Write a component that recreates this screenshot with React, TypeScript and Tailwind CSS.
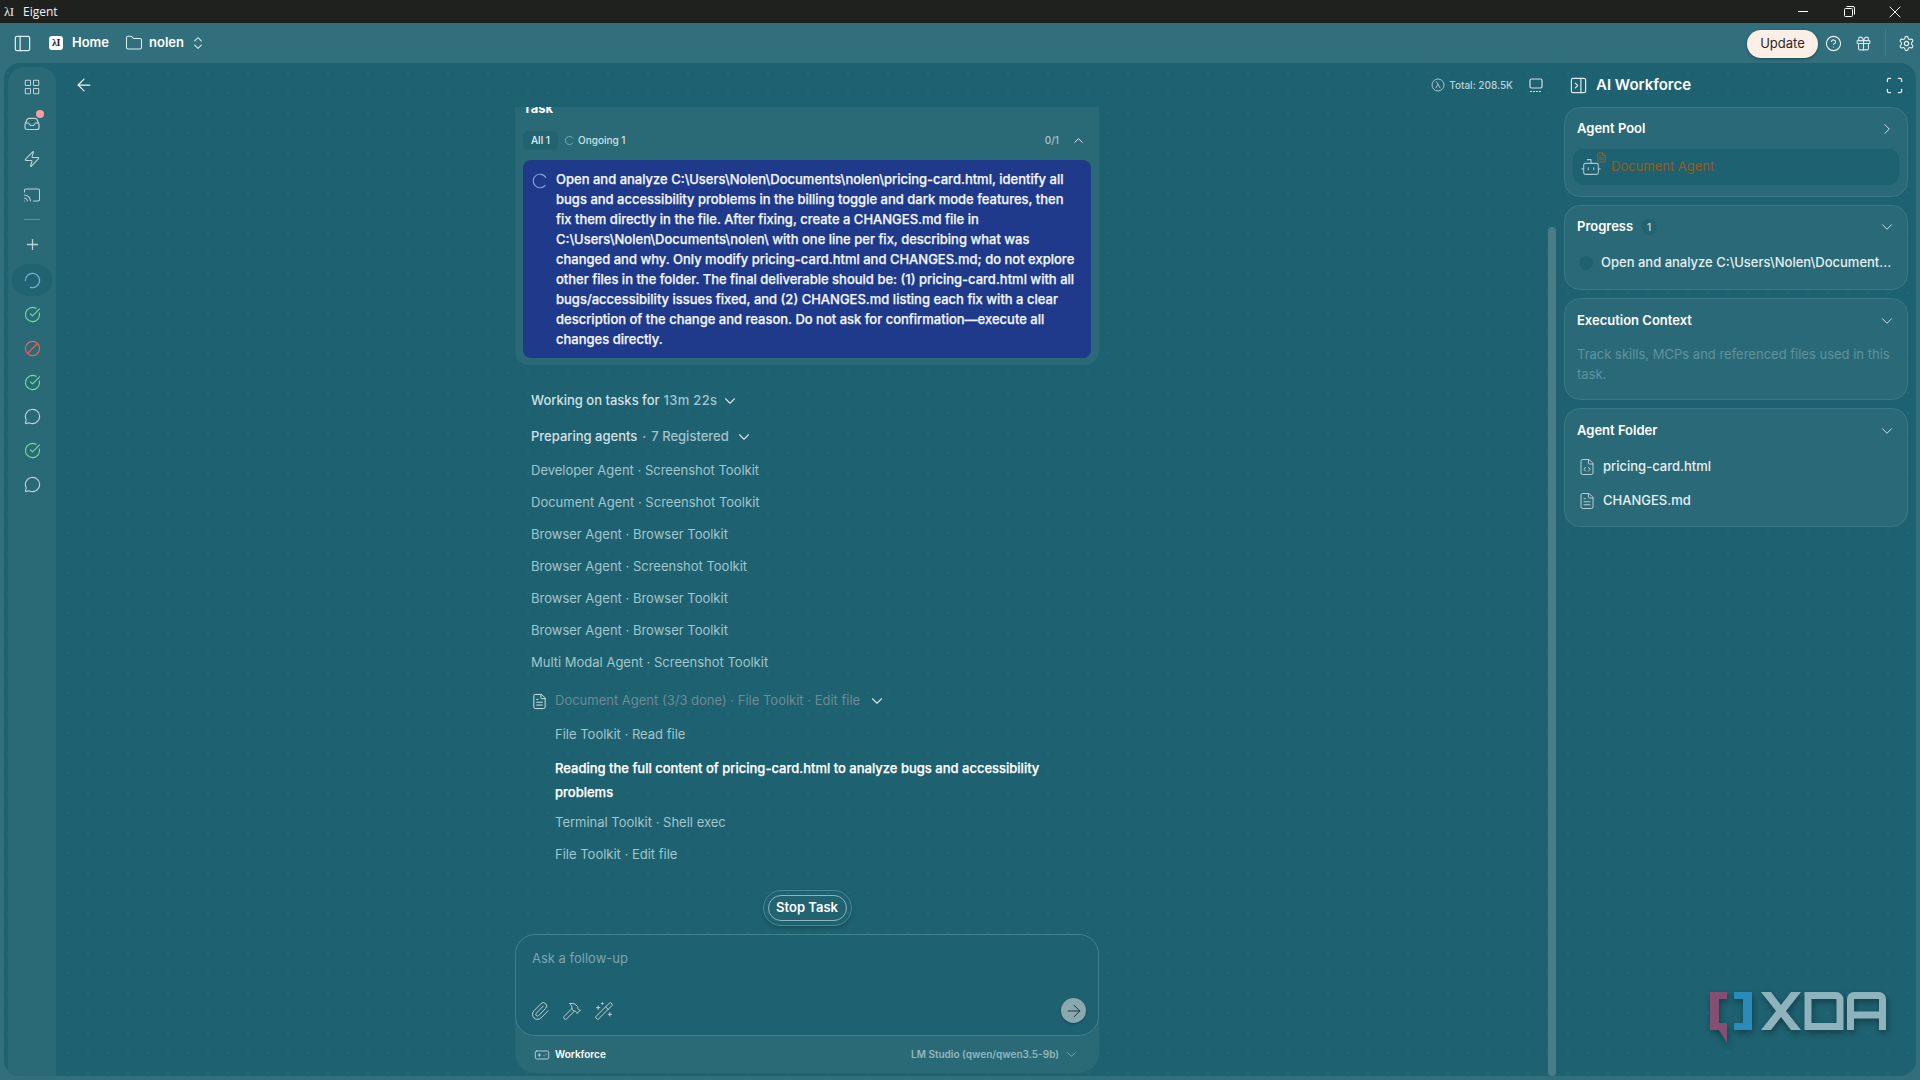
import {
  ArrowLeft,
  ArrowRight,
  Ban,
  Bot,
  ChevronDown,
  ChevronRight,
  ChevronUp,
  ChevronsUpDown,
  CircleCheckBig,
  CircleHelp,
  Cast,
  FileCode,
  FileText,
  Folder,
  Gamepad,
  Gift,
  Hammer,
  LayoutGrid,
  LoaderCircle,
  MessageCircle,
  Paperclip,
  PanelLeft,
  PanelRightClose,
  Plus,
  Scan,
  Settings,
  WandSparkles,
  X,
  Zap,
} from 'lucide-react';

const TASK_TEXT =
  'Open and analyze C:\\Users\\Nolen\\Documents\\nolen\\pricing-card.html, identify all bugs and accessibility problems in the billing toggle and dark mode features, then fix them directly in the file. After fixing, create a CHANGES.md file in C:\\Users\\Nolen\\Documents\\nolen\\ with one line per fix, describing what was changed and why. Only modify pricing-card.html and CHANGES.md; do not explore other files in the folder. The final deliverable should be: (1) pricing-card.html with all bugs/accessibility issues fixed, and (2) CHANGES.md listing each fix with a clear description of the change and reason. Do not ask for confirmation—execute all changes directly.';

const TOOL_ROWS = [
  'Developer Agent · Screenshot Toolkit',
  'Document Agent · Screenshot Toolkit',
  'Browser Agent · Browser Toolkit',
  'Browser Agent · Screenshot Toolkit',
  'Browser Agent · Browser Toolkit',
  'Browser Agent · Browser Toolkit',
  'Multi Modal Agent · Screenshot Toolkit',
];

function LambdaMark({ className }: { className: string }) {
  return (
    <span className={`font-['Liberation_Serif',serif] tracking-[-0.5px] leading-none ${className}`}>
      λI
    </span>
  );
}

function TitleBar() {
  return (
    <div className="h-[23px] shrink-0 bg-[#1f211f] flex items-center text-[#f2f2f2]">
      <LambdaMark className="ml-[4px] w-[19px] text-[13px] text-[#e8e8e8]" />
      <span className="text-[12px] font-['Open_Sans',sans-serif]">Eigent</span>
      <div className="ml-auto mr-[2px] flex items-center">
        <div className="w-[46px] flex justify-center">
          <div className="w-[10px] h-px bg-white" />
        </div>
        <div className="w-[46px] flex justify-center">
          <svg width="11" height="11" viewBox="0 0 11 11" fill="none" stroke="#fff" strokeWidth="1">
            <rect x="0.5" y="2.5" width="8" height="8" rx="1" />
            <path d="M2.5 .5h6.5a1.5 1.5 0 0 1 1.5 1.5v6.5" />
          </svg>
        </div>
        <div className="w-[46px] flex justify-center">
          <X size={20} strokeWidth={1.2} />
        </div>
      </div>
    </div>
  );
}

function TopBar() {
  return (
    <div className="h-[40px] shrink-0 flex items-center pl-[13px] pr-[5px] text-white">
      <PanelLeft size={19} strokeWidth={1.6} className="text-[#dcebef]" />
      <div className="ml-[17px] w-[14px] h-[14px] rounded-[3px] bg-white flex items-center justify-center text-[#222]">
        <LambdaMark className="text-[10px] font-bold" />
      </div>
      <span className="ml-[9px] text-[13px] font-semibold">Home</span>
      <Folder size={18} strokeWidth={1.4} className="ml-[16px] text-[#dcebef]" />
      <span className="ml-[6px] text-[13px] font-semibold">nolen</span>
      <ChevronsUpDown size={16} strokeWidth={1.6} className="ml-[6px] text-[#c9dde2]" />
      <button className="ml-auto w-[71px] h-[28px] mt-[1px] rounded-full bg-[#fdeee6] text-[#29292b] text-[13px] shadow-[0_1px_3px_rgba(0,0,0,0.35)]">
        Update
      </button>
      <CircleHelp size={17} strokeWidth={1.6} className="ml-[7px] text-[#e6f0f2]" />
      <Gift size={17} strokeWidth={1.6} className="ml-[13px] text-[#d5e5e9]" />
      <div className="ml-[13px] w-px h-[28px] bg-[#3f7c89]" />
      <Settings size={17} strokeWidth={1.6} className="ml-[12px] text-[#e6f0f2]" />
    </div>
  );
}

function Sidebar() {
  const muted = 'text-[#bcd3d8]';
  return (
    <div className="w-[48px] shrink-0 ml-[4px] mt-[4px] rounded-t-[16px] bg-[#2a6a77] flex flex-col items-center pt-[11px]">
      <LayoutGrid size={18} strokeWidth={1.4} className={muted} />
      <div className="relative mt-[20px] h-[15px]">
        <svg width="16" height="15" viewBox="0 0 16 15" fill="none" stroke="#bcd3d8" strokeWidth="1.2" strokeLinejoin="round">
          <path d="M1 8.5 3 3.5a2 2 0 0 1 2-1.2h6a2 2 0 0 1 2 1.2l2 5v3a2 2 0 0 1-2 2H3a2 2 0 0 1-2-2z" />
          <path d="M1 7h3.5l2 2.5h3l2-2.500H15" />
        </svg>
        <span className="absolute right-[-4px] top-[-6px] w-[8px] h-[8px] rounded-full bg-[#fb9e9e]" />
      </div>
      <Zap size={18} strokeWidth={1.4} className={`mt-[19px] ${muted}`} />
      <Cast size={18} strokeWidth={1.4} className={`mt-[18px] ${muted}`} />
      <div className="mt-[15px] w-[16px] h-px bg-[#5b919d]" />
      <Plus size={17} strokeWidth={1.8} className={`mt-[16px] ${muted}`} />
      <div className="mt-[11px] w-[40px] h-[32px] rounded-full bg-[#226371] flex items-center justify-center">
        <LoaderCircle size={19} strokeWidth={1.6} className="text-[#6fb1d8] rotate-180" />
      </div>
      <CircleCheckBig size={17} strokeWidth={1.6} className="mt-[10px] text-[#71dc9e]" />
      <Ban size={17} strokeWidth={1.6} className="mt-[17px] -scale-x-100 text-[#ee5f5f]" />
      <CircleCheckBig size={17} strokeWidth={1.6} className="mt-[17px] text-[#71dc9e]" />
      <MessageCircle size={17} strokeWidth={1.6} className={`mt-[17px] ${muted}`} />
      <CircleCheckBig size={17} strokeWidth={1.6} className="mt-[17px] text-[#71dc9e]" />
      <MessageCircle size={17} strokeWidth={1.6} className={`mt-[17px] ${muted}`} />
    </div>
  );
}

function TaskCard() {
  return (
    <div className="w-[584px] h-[258px] shrink-0 overflow-hidden rounded-b-[14px] bg-[#2a6a77] px-[8px]">
      <div className="h-[24px] text-[13px] font-bold text-white leading-[14px] -translate-y-[6px]">Task</div>
      <div className="flex items-center h-[19px] text-[10px] font-medium">
        <span className="w-[35px] h-[19px] rounded-[5px] bg-[#226371] flex items-center justify-center text-[#e6f0f2]">All 1</span>
        <LoaderCircle size={11} strokeWidth={1.8} className="ml-[6px] text-[#6fb1d8] rotate-[40deg]" />
        <span className="ml-[3px] text-[#cfe0e4]">Ongoing 1</span>
        <span className="ml-auto text-[#a5c2c9]">0/1</span>
        <ChevronUp size={15} strokeWidth={1.6} className="ml-[12px] mr-[5px] text-[#e6f0f2]" />
      </div>
      <div className="mt-[10px] h-[198px] rounded-[8px] bg-[#1f3a8a] flex pt-[9px] pl-[8px] pr-[14px]">
        <LoaderCircle size={18} strokeWidth={1.5} className="mt-[3px] shrink-0 text-[#7da4e0] rotate-[40deg]" />
        <p className="ml-[7px] text-[13px] leading-[20px] font-medium text-[#f2f5fc] [-webkit-text-stroke:0.25px_currentColor]">{TASK_TEXT}</p>
      </div>
    </div>
  );
}

function ActivityLog() {
  return (
    <div className="w-[582px] shrink-0 pl-[15px] text-[13px] text-[#a3c5cc] font-medium">
      <div className="mt-[26px] h-[20px] flex items-center">
        <span className="text-[#d2e2e6] font-medium">Working on tasks for</span>
        <span className="ml-[4px] tracking-[0.3px]">13m 22s</span>
        <ChevronDown size={18} strokeWidth={1.5} className="ml-[4px] text-[#d2e2e6]" />
      </div>
      <div className="mt-[16px] h-[20px] flex items-center">
        <span className="text-[#d2e2e6]">Preparing agents</span>
        <span className="ml-[5px]">·</span>
        <span className="ml-[5px]">7 Registered</span>
        <ChevronDown size={18} strokeWidth={1.5} className="ml-[6px] text-[#d2e2e6]" />
      </div>
      <div className="mt-[8px] flex flex-col">
        {TOOL_ROWS.map((row, i) => (
          <div key={i} className="h-[32px] flex items-center font-normal">
            {row}
          </div>
        ))}
      </div>
      <div className="relative mt-[6px] h-[32px] flex items-center pl-[24px] font-normal">
        <FileText size={17} strokeWidth={1.4} className="absolute left-0 top-[8px] text-[#d2e2e6]" />
        <span className="text-[#6e8a93]">Document Agent (3/3 done) · File Toolkit · Edit file</span>
        <ChevronDown size={18} strokeWidth={1.5} className="ml-[8px] text-[#d2e2e6]" />
      </div>
      <div className="pl-[24px] font-normal">
        <div className="h-[24px] mt-[6px] flex items-center">File Toolkit · Read file</div>
        <p className="mt-[9px] w-[510px] leading-[24px] font-medium text-white [-webkit-text-stroke:0.25px_currentColor]">
          Reading the full content of pricing-card.html to analyze bugs and accessibility problems
        </p>
        <div className="h-[24px] mt-[7px] flex items-center">Terminal Toolkit · Shell exec</div>
        <div className="h-[24px] mt-[8px] flex items-center">File Toolkit · Edit file</div>
      </div>
    </div>
  );
}

function Composer() {
  return (
    <div className="w-[584px] h-[139px] shrink-0 rounded-[20px] bg-[#2a6a77]">
      <div className="h-[102px] rounded-[20px] border border-[#41808d] bg-[#1e6170] flex flex-col pt-[13px] pl-[14px] pr-[12px]">
        <span className="ml-[2px] text-[13px] leading-[20px] text-[#7ba6af]">Ask a follow-up</span>
        <div className="mt-auto mb-[12px] flex items-center text-[#bcd3d8]">
          <Paperclip size={20} strokeWidth={1.2} />
          <Hammer size={20} strokeWidth={1.2} className="ml-[12px]" />
          <WandSparkles size={20} strokeWidth={1.2} className="ml-[12px]" />
          <div className="ml-auto w-[25px] h-[25px] rounded-full bg-[#8aa9ae] flex items-center justify-center text-[#17363e] shadow-[0_1px_2px_rgba(0,0,0,0.3)]">
            <ArrowRight size={20} strokeWidth={1.2} />
          </div>
        </div>
      </div>
      <div className="h-[37px] flex items-center pl-[19px] pr-[20px] text-[10px] font-semibold">
        <Gamepad size={16} strokeWidth={1.3} className="text-[#c5d9de]" />
        <span className="ml-[5px] text-white">Workforce</span>
        <span className="ml-auto text-[#94b7bf]">LM Studio (qwen/qwen3.5-9b)</span>
        <ChevronDown size={15} strokeWidth={1.2} className="ml-[5px] text-[#94b7bf]" />
      </div>
    </div>
  );
}

function PanelCard({ children, className }: { children: React.ReactNode; className: string }) {
  return <div className={`rounded-[16px] border border-[#3a7886] bg-[#2a6a78] ${className}`}>{children}</div>;
}

function CardHeader({ title, badge, open = true }: { title: string; badge?: string; open?: boolean }) {
  return (
    <div className="h-[20px] flex items-center text-[13px] font-semibold text-white pl-[12px] pr-[11px]">
      <span>{title}</span>
      {badge && (
        <span className="ml-[8px] w-[16px] h-[16px] rounded-full bg-[#226371] flex items-center justify-center text-[10px] text-[#bcd3d8]">
          {badge}
        </span>
      )}
      {open ? (
        <ChevronDown size={18} strokeWidth={1.3} className="ml-auto text-[#d2e2e6]" />
      ) : (
        <ChevronRight size={18} strokeWidth={1.3} className="ml-auto text-[#d2e2e6]" />
      )}
    </div>
  );
}

function WorkforcePanel() {
  return (
    <div className="w-[344px] shrink-0 mr-[8px] flex flex-col">
      <div className="h-[44px] flex items-center pl-[5px] pr-[4px] text-white">
        <PanelRightClose size={19} strokeWidth={1.5} className="text-[#dcebef]" />
        <span className="ml-[8px] text-[15px] font-semibold">AI Workforce</span>
        <Scan size={19} strokeWidth={1.6} className="ml-auto text-[#e6f0f2]" />
      </div>
      <div className="flex flex-col gap-[8px]">
        <PanelCard className="h-[90px] pt-[11px]">
          <CardHeader title="Agent Pool" open={false} />
          <div className="relative mt-[10px] mx-[8px] h-[36px] rounded-[10px] bg-[#1e6170] flex items-center pl-[7px]">
            <Bot size={22} strokeWidth={1.2} className="text-[#a9c6cd]" />
            <FileText size={11} strokeWidth={1.5} className="absolute left-[23px] top-[3px] text-[#a2702f]" />
            <span className="ml-[9px] text-[13px] text-[#945d1f]">Document Agent</span>
          </div>
        </PanelCard>
        <PanelCard className="h-[85px] pt-[11px]">
          <CardHeader title="Progress" badge="1" />
          <div className="mt-[16px] flex items-center pl-[14px] text-[13px] font-medium text-[#e6f0f2]">
            <span className="w-[14px] h-[14px] rounded-full bg-[#1e6170] border border-[#226371]" />
            <span className="ml-[8px]">Open and analyze C:\Users\Nolen\Document...</span>
          </div>
        </PanelCard>
        <PanelCard className="h-[102px] pt-[12px]">
          <CardHeader title="Execution Context" />
          <p className="mt-[13px] px-[12px] text-[13px] leading-[20px] text-[#5f929e]">
            Track skills, MCPs and referenced files used in this task.
          </p>
        </PanelCard>
        <PanelCard className="h-[119px] pt-[12px]">
          <CardHeader title="Agent Folder" />
          <div className="mt-[16px] pl-[13px] flex flex-col gap-[14px] text-[13px] font-medium text-[#e6f0f2]">
            <div className="h-[20px] flex items-center">
              <FileCode size={18} strokeWidth={1.2} className="text-[#c5d9de]" />
              <span className="ml-[7px]">pricing-card.html</span>
            </div>
            <div className="h-[20px] flex items-center">
              <FileText size={18} strokeWidth={1.2} className="text-[#c5d9de]" />
              <span className="ml-[7px]">CHANGES.md</span>
            </div>
          </div>
        </PanelCard>
      </div>
    </div>
  );
}

function XdaLogo() {
  return (
    <svg
      width="176"
      height="51"
      viewBox="0 0 176 51"
      fill="none"
      className="absolute right-[30px] bottom-[33px] drop-shadow-[1px_3px_3px_rgba(0,0,0,0.35)]"
    >
      <path d="M0 0h17v7H9v24h8v20l-8-13H0z" fill="#844f73" />
      <path d="M24 0h18v38H24v-7h9V7h-9z" fill="#2a8bb8" />
      <path d="M51 0h10l10 13L81 0h10L76 19l15 19H81L71 25 61 38H51l15-19z" fill="#8fb3bd" />
      <path d="M98 3.500h28a4 4 0 0 1 4 4v27H98z" stroke="#8fb3bd" strokeWidth="7" />
      <path d="M140.500 38V7a3.500 3.500 0 0 1 3.500-3.500h25a3.500 3.500 0 0 1 3.500 3.500v31M140.500 23h32" stroke="#8fb3bd" strokeWidth="7" />
    </svg>
  );
}

export default function App() {
  return (
    <div className="h-[1080px] w-[1920px] overflow-hidden flex flex-col bg-[#316f7c] font-['Inter',sans-serif]">
      <TitleBar />
      <TopBar />
      <div className="relative ml-[4px] mr-[4px] h-[1013px] rounded-[16px] overflow-hidden flex bg-[#1e6170] bg-[radial-gradient(circle,#266876_1px,transparent_1px)] bg-[size:20px_20px] bg-[position:14px_0px]">
        <Sidebar />
        <div className="relative flex-1 min-w-0 flex flex-col items-center pr-[6px]">
          <div className="self-stretch h-[44px] shrink-0 flex items-center pl-[18px] pr-[15px]">
            <ArrowLeft size={20} strokeWidth={1.5} className="text-[#eef5f7]" />
            <svg width="14" height="14" viewBox="0 0 14 14" fill="none" stroke="#a9c6cd" strokeWidth="1" className="ml-auto">
              <circle cx="7" cy="7" r="6" />
              <path d="M4.800 3.800h.8L9.300 10.300M7 6.300 4.700 10.300" />
            </svg>
            <span className="ml-[4px] text-[10px] font-medium text-[#b9d1d6]">Total: 208.5K</span>
            <svg width="14" height="15" viewBox="0 0 14 15" fill="none" stroke="#d2e2e6" strokeWidth="1.2" className="ml-[16px]">
              <rect x="1" y="1" width="12" height="9" rx="1.500" />
              <path d="M1 13.500h12" strokeDasharray="2 1" />
            </svg>
          </div>
          <TaskCard />
          <ActivityLog />
          <div className="mt-[23px] h-[36px] w-[89px] shrink-0 rounded-full border border-[#4a8896] p-[4px] shadow-[0_2px_4px_rgba(0,0,0,0.2)]">
            <div className="h-full rounded-full border border-[#8fb3bd] bg-[#226371] flex items-center justify-center text-[13px] font-semibold text-white">
              Stop Task
            </div>
          </div>
          <div className="mt-[8px]">
            <Composer />
          </div>
          <div className="absolute right-[8px] top-[164px] bottom-0 w-[8px] rounded-full bg-[#4a7c88]" />
        </div>
        <WorkforcePanel />
        <XdaLogo />
      </div>
    </div>
  );
}
